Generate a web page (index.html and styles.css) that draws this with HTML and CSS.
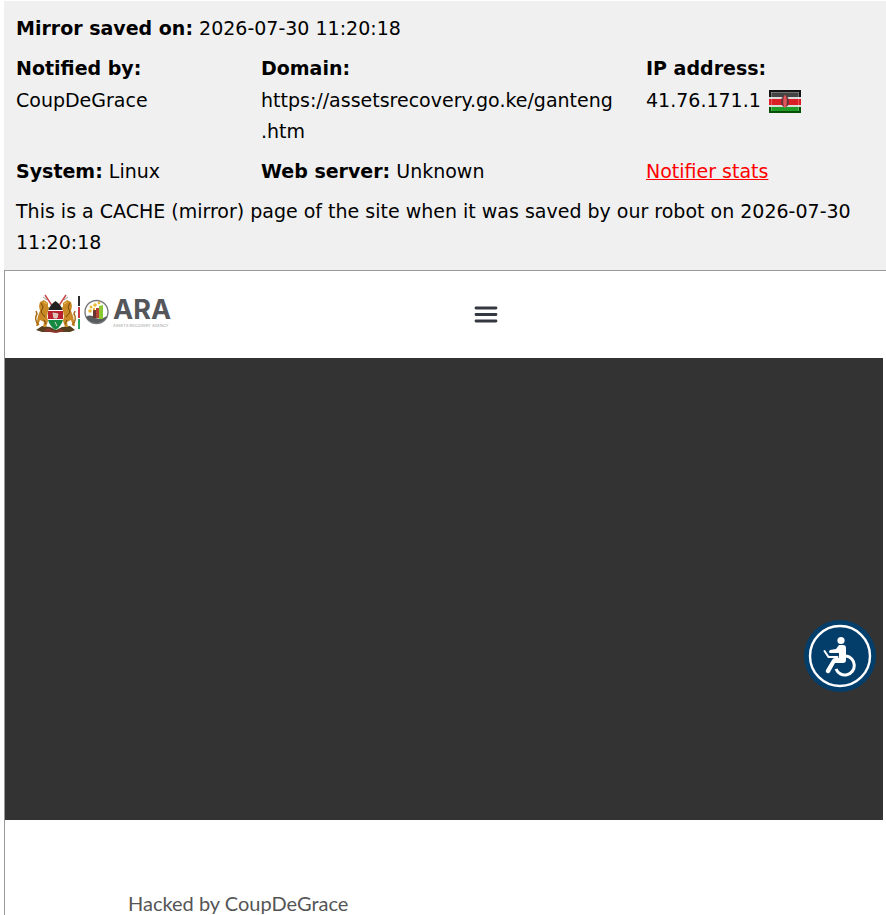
FILE: index.html
```html
<!DOCTYPE html>
<html lang="en">
<head>
  <meta charset="utf-8">
  <title>Mirror</title>
  <link rel="stylesheet" href="styles.css">
</head>
<body>
  <div class="info">
    <div class="row"><strong>Mirror saved on:</strong> 2026-07-30 11:20:18</div>
    <div class="details">
      <div class="cell">
        <strong class="label">Notified by:</strong>CoupDeGrace
      </div>
      <div class="cell">
        <strong class="label">Domain:</strong>https://assetsrecovery.go.ke/ganteng<wbr>.htm
      </div>
      <div class="cell">
        <strong class="label">IP address:</strong>41.76.171.1
        <svg class="flag" viewBox="0 0 32 23" role="img" aria-label="Kenya">
          <rect width="32" height="23" fill="#151515"/>
          <rect x="2" y="2" width="28" height="5" fill="#444"/>
          <rect y="7" width="32" height="2" fill="#ddd"/>
          <rect y="9" width="32" height="6" fill="#dc1f26"/>
          <rect y="15" width="32" height="2" fill="#d8ded8"/>
          <rect y="17" width="32" height="6" fill="#064f08"/>
          <rect x="2" y="17" width="28" height="4" fill="#219a26"/>
          <ellipse cx="16" cy="11.500" rx="4" ry="5.500" fill="#6b3338"/>
          <ellipse cx="16" cy="11.500" rx="1.800" ry="6.500" fill="#e2555a"/>
          <path d="M2 2.500h28M2.500 2v19M29.500 2v19" stroke="#fff" opacity=".25" fill="none"/>
        </svg>
      </div>
      <div class="cell"><strong>System:</strong> Linux</div>
      <div class="cell"><strong>Web server:</strong> Unknown</div>
      <div class="cell"><a href="#stats">Notifier stats</a></div>
    </div>
    <div class="row">This is a CACHE (mirror) page of the site when it was saved by our robot on 2026-07-30 11:20:18</div>
  </div>

  <div class="mirror">
    <header class="site-header">
      <a class="logo" href="#home" aria-label="Assets Recovery Agency">
        <svg viewBox="0 0 140 42">
          <!-- coat of arms -->
          <path d="M10 1l10 15M31 1L21 16" stroke="#c9474a" stroke-width="1.500"/>
          <path d="M8 3l4 3M33 3l-4 3" stroke="#999"/>
          <path d="M1 36l6-4 8 1 6 3 6-3 8-1 5 4-5 2H7z" fill="#54401f"/>
          <path d="M8 37l5-3 4 2 4 1 5-2 4 2-9 2z" fill="#8b3428"/>
          <g id="lion" fill="#c98a26">
            <path d="M5 8l4-2 4 3v4l4 1v2l-4 1 3 4-1 2-3-2 1 6-2 6H8l1-5-4-2-2 6H1l2-10 2-5-1-5z"/>
            <path d="M4 31c-4-3-4-8-2-11l-1-3" fill="none" stroke="#a66b1b" stroke-width="1.500"/>
            <path d="M6 9l2 4-2 5 4 5M9 26l2 4" fill="none" stroke="#75480f"/>
            <path d="M9 8l3 2" stroke="#f0c460"/>
          </g>
          <use href="#lion" transform="matrix(-1 0 0 1 41 0)"/>
          <path d="M20.500 7c4 3 8 8 8 14 0 7-4 12-8 15-4-3-8-8-8-15 0-6 4-11 8-14z" fill="#fff"/>
          <path d="M20.500 7c3 2 6 5 7 9h-14c1-4 4-7 7-9z" fill="#222"/>
          <path d="M13 17h15v8H13z" fill="#b8212d"/>
          <path d="M13 26h15c-1 4-4 8-7.500 10-3.500-2-6.500-6-7.500-10z" fill="#168a43"/>
          <path d="M18 19l5 1-1 4h-3zM20 28l2 4" fill="#e6b9b2" stroke="#d6d6ca"/>
          <!-- flag divider -->
          <path d="M44 2v10" stroke="#2c2c2c" stroke-width="2"/>
          <path d="M44 13v11" stroke="#c83b45" stroke-width="2"/>
          <path d="M44 25v10" stroke="#27a45b" stroke-width="2"/>
          <!-- agency emblem -->
          <circle cx="61.500" cy="18" r="11.500" fill="#fff" stroke="#777a7d" stroke-width="1.400"/>
          <path d="M51 23c3-2 6-2 9 1l6 1 6-3c-2 5-6 7-10 7-5 0-9-2-11-6z" fill="#595b5e"/>
          <path d="M58 16h3v8h-3z" fill="#69362f"/>
          <path d="M61 14h3v10h-3z" fill="#b64135"/>
          <path d="M64 12l4-1v14h-4z" fill="#8bc834"/>
          <g fill="#e8b932"><circle cx="55" cy="17" r="1.800"/><circle cx="56" cy="13" r="1.500"/><circle cx="60" cy="11" r="1.800"/><circle cx="64" cy="9" r="1.400"/><circle cx="59" cy="15" r="1.200"/></g>
          <text class="logo-name" x="78" y="25">ARA</text>
          <text class="logo-sub" x="78" y="33">ASSETS RECOVERY AGENCY</text>
        </svg>
      </a>
      <button class="menu" aria-label="Menu">
        <svg viewBox="0 0 24 18">
          <path d="M2 2h20M2 8.500h20M2 15h20" stroke="#343841" stroke-width="2.800" stroke-linecap="round"/>
        </svg>
      </button>
    </header>

    <div class="hero">
      <button class="access" aria-label="Accessibility">
        <svg viewBox="0 0 72 72" fill="none" stroke="#fff">
          <circle cx="36" cy="36" r="30" stroke-width="2.400"/>
          <circle cx="37" cy="20.500" r="3.600" fill="#fff" stroke="none"/>
          <path d="M35 25h4q3 0 3 3v12q0 3-3 3h-8l-5 9q-1 2-3 1t-1-3l6-10q1-2 3-2h4v-5h-9q-2-1 0-3l6-1z" fill="#fff" stroke="none"/>
          <path d="M20.500 31l4 6h9" stroke-width="2" stroke-linecap="round"/>
          <path d="M42 36a9.500 9.500 0 1 1-10 13" stroke-width="3"/>
        </svg>
      </button>
    </div>

    <p class="message">Hacked by CoupDeGrace</p>
  </div>
</body>
</html>
```
FILE: styles.css
```css
body {
  margin: 1px 0 0 4px;
  background: #fff;
  color: #000;
  font-family: Verdana, "DejaVu Sans", sans-serif;
  font-size: 19px;
  line-height: 31px;
}

.info {
  display: flex;
  flex-direction: column;
  gap: 9px;
  padding: 12px 0 12px 12px;
  background: #f0f0f0;
}

.details {
  display: grid;
  grid-template-columns: 49fr 77fr 48fr;
  row-gap: 9px;
}

.cell {
  padding-right: 20px;
  overflow-wrap: anywhere;
}

.label {
  display: block;
  margin-bottom: 1px;
}

.info a {
  color: #f00;
}

.flag {
  width: 32px;
  height: 23px;
  margin-left: 2px;
  vertical-align: middle;
}

.mirror {
  border: 1px solid #999;
  border-width: 1px 0 0 1px;
  padding-right: 3px;
}

.site-header {
  display: grid;
  grid-template-columns: 1fr 1fr;
  align-items: center;
  height: 87px;
}

.logo {
  width: 140px;
  margin-left: 30px;
}

.logo svg,
.menu svg,
.access svg {
  display: block;
}

.logo-name {
  fill: #55565a;
  font-family: Inter, sans-serif;
  font-size: 27px;
  font-weight: 700;
}

.logo-sub {
  fill: #a0a0a0;
  font-family: Inter, sans-serif;
  font-size: 4px;
}

.menu {
  width: 24px;
  margin-left: 30px;
  padding: 0;
  border: 0;
  background: none;
  cursor: pointer;
}

.hero {
  position: relative;
  height: 462px;
  background: #333;
}

.access {
  position: absolute;
  right: 7px;
  bottom: 128px;
  width: 72px;
  height: 72px;
  padding: 0;
  border: 0;
  border-radius: 50%;
  background: #033e6b;
  cursor: pointer;
}

.message {
  margin: 68px 0 0 123px;
  color: #555;
  font-family: Lato, sans-serif;
  font-size: 20px;
}
```
